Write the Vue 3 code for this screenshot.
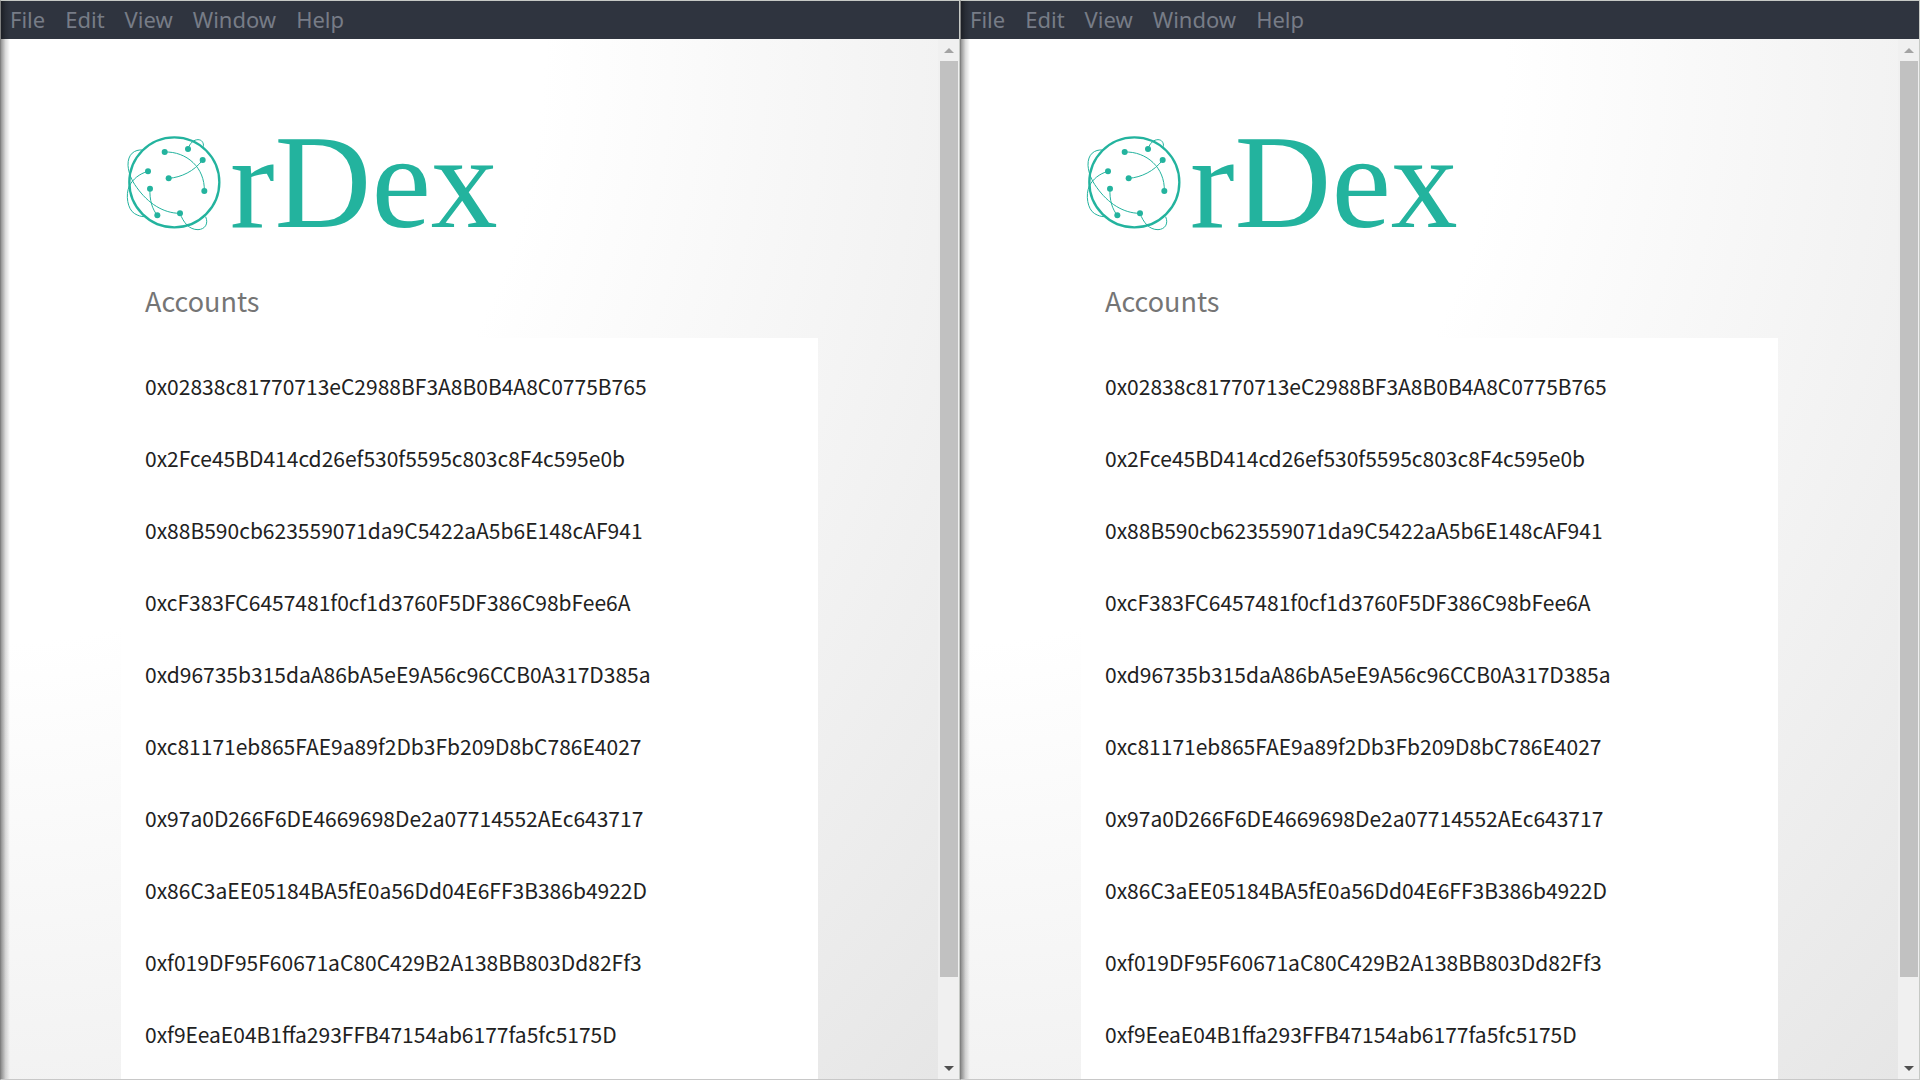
<script setup>
const windows = ['left', 'right']
const menus = ['File', 'Edit', 'View', 'Window', 'Help']
const accounts = [
  '0x02838c81770713eC2988BF3A8B0B4A8C0775B765',
  '0x2Fce45BD414cd26ef530f5595c803c8F4c595e0b',
  '0x88B590cb623559071da9C5422aA5b6E148cAF941',
  '0xcF383FC6457481f0cf1d3760F5DF386C98bFee6A',
  '0xd96735b315daA86bA5eE9A56c96CCB0A317D385a',
  '0xc81171eb865FAE9a89f2Db3Fb209D8bC786E4027',
  '0x97a0D266F6DE4669698De2a07714552AEc643717',
  '0x86C3aEE05184BA5fE0a56Dd04E6FF3B386b4922D',
  '0xf019DF95F60671aC80C429B2A138BB803Dd82Ff3',
  '0xf9EeaE04B1ffa293FFB47154ab6177fa5fc5175D',
]
const nodes = [
  [134, 78], [204, 69], [248, 102], [84, 136], [146, 157],
  [90, 188], [253, 195], [180, 262], [112, 268],
]
</script>

<template>
  <div class="desktop">
    <section v-for="side in windows" :key="side" class="window" :aria-label="`OrDex ${side}`">
      <nav class="menubar">
        <button v-for="menu in menus" :key="menu" type="button" class="menu">{{ menu }}</button>
      </nav>
      <div class="viewport">
        <main class="page">
          <h1 class="logo">
            <svg class="globe" viewBox="3 0 327 330" role="img" aria-label="O">
              <circle class="ring" cx="163" cy="169" r="135" />
              <g class="links">
                <path d="M134 78C200 76 255 125 253 195" />
                <path d="M146 157C184 154 222 136 248 102" />
                <path d="M84 136C58 143 38 160 28 180C16 206 22 250 44 263C54 269 64 272 72 272" />
                <path d="M68 72C44 70 23 84 24 118C26 142 34 162 50 184C84 232 130 262 180 262" />
                <path d="M90 188C88 222 97 250 112 268" />
                <path d="M204 69C210 50 222 41 234 41C245 41 252 50 250 62" />
                <path d="M180 262C190 289 207 311 234 311C255 310 266 294 257 272" />
              </g>
              <circle v-for="([x, y]) in nodes" :key="`${x}-${y}`" class="node" :cx="x" :cy="y" r="9" />
            </svg>
            <span>rDex</span>
          </h1>
          <h2 class="heading">Accounts</h2>
          <ul class="accounts">
            <li v-for="account in accounts" :key="account" class="account">{{ account }}</li>
          </ul>
        </main>
        <div class="scrollbar">
          <button type="button" class="arrow" aria-label="Scroll up">
            <svg viewBox="0 0 10 5" class="glyph muted"><path d="M0 5L5 0L10 5Z" /></svg>
          </button>
          <div class="track"><div class="thumb"></div></div>
          <button type="button" class="arrow" aria-label="Scroll down">
            <svg viewBox="0 0 10 5" class="glyph"><path d="M0 0H10L5 5Z" /></svg>
          </button>
        </div>
      </div>
    </section>
  </div>
</template>

<style>
body {
  margin: 0;
  overflow: hidden;
}
</style>

<style scoped>
.desktop {
  display: flex;
  height: 100vh;
}

.window {
  position: relative;
  box-sizing: border-box;
  display: flex;
  flex: 1;
  flex-direction: column;
  min-width: 0;
  border: 1px solid #c6c9c5;
  border-bottom-color: #c8c8c8;
  border-left-color: #808080;
  overflow: hidden;
}

/* Shadow cast over the window's left edge */
.window::after {
  content: '';
  position: absolute;
  inset: 0 auto 0 0;
  width: 9px;
  background: linear-gradient(to right, rgba(0, 0, 0, 0.42), rgba(0, 0, 0, 0.14) 50%, transparent);
  pointer-events: none;
}

.menubar {
  display: flex;
  flex: none;
  height: 38px;
  padding-left: 9px;
  gap: 20px;
  background: #2f343f;
}

.menu {
  height: 36px;
  padding: 0;
  border: 0;
  background: none;
  color: #777c87;
  font: 22px/36px "Noto Sans", sans-serif;
}

.viewport {
  display: flex;
  flex: 1;
  min-height: 0;
  background: #f0f0f0;
}

.page {
  display: flex;
  flex: 1;
  flex-direction: column;
  min-width: 0;
  padding: 87px 120px 0;
  background: radial-gradient(farthest-corner at 0 0, #fff 41%, #e6e6e6 100%);
  font-family: "Noto Sans CJK SC", sans-serif;
  overflow: hidden;
}

.logo {
  display: flex;
  flex: none;
  height: 110px;
  margin: 0;
  color: #23b39e;
  font: 134px/112px "Liberation Serif", serif;
}

.globe {
  flex: none;
  width: 109px;
  height: 110px;
}

.ring,
.links {
  fill: none;
  stroke: #23b39e;
}

.ring {
  stroke-width: 7;
}

.links {
  stroke-width: 3;
}

.node {
  fill: #23b39e;
}

.heading {
  flex: none;
  margin: 45px 0 17px;
  padding: 0 24px;
  color: #757575;
  font-size: 27px;
  font-weight: 400;
  line-height: 40px;
}

.accounts {
  flex: 1 0 auto;
  margin: 0;
  padding: 12px 24px;
  background: #fff;
  list-style: none;
}

.account {
  color: #212121;
  font-size: 21px;
  line-height: 72px;
}

.scrollbar {
  display: flex;
  flex: none;
  flex-direction: column;
  width: 21px;
}

.arrow {
  display: flex;
  flex: none;
  align-items: center;
  justify-content: center;
  height: 22px;
  padding: 0;
  border: 0;
  background: none;
}

.glyph {
  width: 10px;
  height: 5px;
  fill: #505050;
}

.muted {
  fill: #a3a3a3;
}

.track {
  flex: 1;
  padding: 0 1px 0 2px;
}

.thumb {
  height: 92%;
  background: #c1c1c1;
}
</style>
